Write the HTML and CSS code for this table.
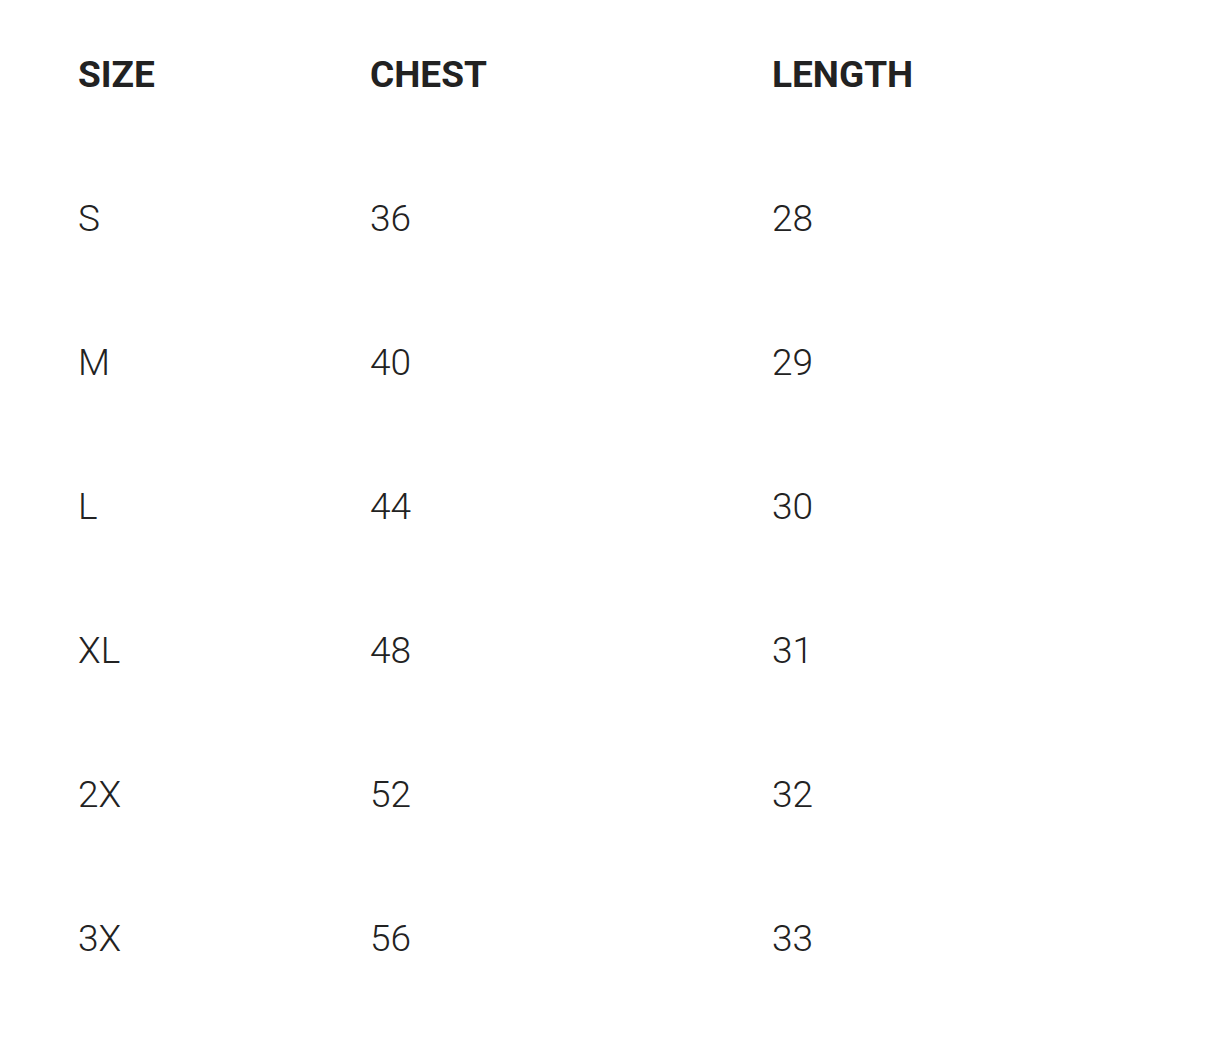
FILE: index.html
```html
<!DOCTYPE html>
<html>
<head>
<meta charset="utf-8">
<link rel="stylesheet" href="styles.css">
</head>
<body>
<table class="chart">
  <thead>
    <tr><th class="c1">SIZE</th><th class="c2">CHEST</th><th class="c3">LENGTH</th></tr>
  </thead>
  <tbody>
    <tr><td>S</td><td>36</td><td>28</td></tr>
    <tr><td>M</td><td>40</td><td>29</td></tr>
    <tr><td>L</td><td>44</td><td>30</td></tr>
    <tr><td>XL</td><td>48</td><td>31</td></tr>
    <tr><td>2X</td><td>52</td><td>32</td></tr>
    <tr><td>3X</td><td>56</td><td>33</td></tr>
  </tbody>
</table>
</body>
</html>
```
FILE: styles.css
```css
html, body {
  margin: 0;
  padding: 0;
  background: #fff;
}
body {
  font-family: Roboto, "Liberation Sans", sans-serif;
  color: #222;
  padding: 3px 0 0 78px;
}
.chart {
  border-collapse: collapse;
  table-layout: fixed;
  width: 1000px;
}
.chart th, .chart td {
  padding: 0;
  height: 144px;
  line-height: 144px;
  font-size: 37px;
  text-align: left;
  vertical-align: top;
  white-space: nowrap;
}
.chart th {
  font-weight: 700;
}
.chart td {
  font-weight: 300;
}
.c1 { width: 292px; }
.c2 { width: 402px; }
.c3 { width: 306px; }
```
